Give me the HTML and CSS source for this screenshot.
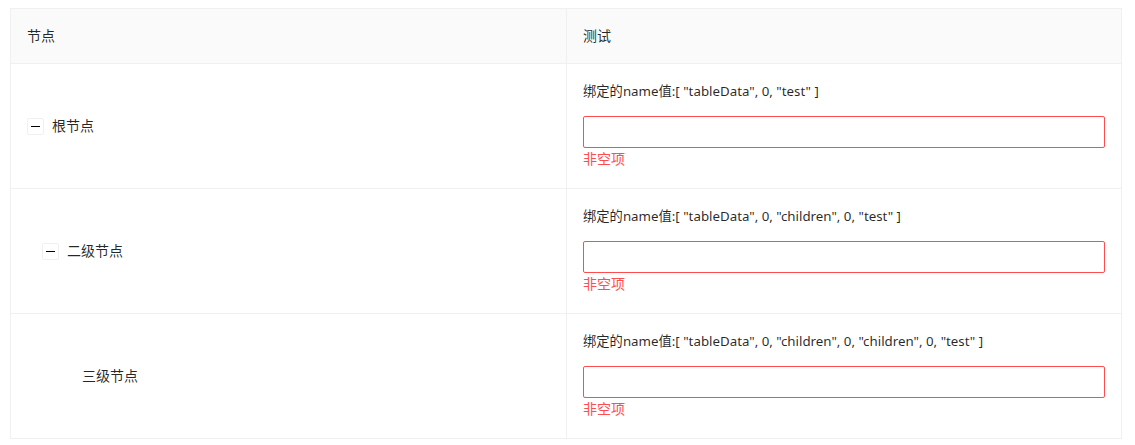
FILE: index.html
```html
<!DOCTYPE html>
<html lang="zh">
<head>
<meta charset="utf-8">
<link rel="stylesheet" href="styles.css">
</head>
<body>
<table class="tree-table">
  <thead>
    <tr>
      <th class="col-node">节点</th>
      <th class="col-test">测试</th>
    </tr>
  </thead>
  <tbody>
    <tr>
      <td class="cell-node">
        <span class="node level-0"><span class="expand"></span><span>根节点</span></span>
      </td>
      <td class="cell-test">
        <div class="label">绑定的name值:[ "tableData", 0, "test" ]</div>
        <div class="input"></div>
        <div class="error">非空项</div>
      </td>
    </tr>
    <tr>
      <td class="cell-node">
        <span class="node level-1"><span class="expand"></span><span>二级节点</span></span>
      </td>
      <td class="cell-test">
        <div class="label">绑定的name值:[ "tableData", 0, "children", 0, "test" ]</div>
        <div class="input"></div>
        <div class="error">非空项</div>
      </td>
    </tr>
    <tr>
      <td class="cell-node">
        <span class="node level-2"><span class="spacer"></span><span>三级节点</span></span>
      </td>
      <td class="cell-test">
        <div class="label">绑定的name值:[ "tableData", 0, "children", 0, "children", 0, "test" ]</div>
        <div class="input"></div>
        <div class="error">非空项</div>
      </td>
    </tr>
  </tbody>
</table>
</body>
</html>
```
FILE: styles.css
```css
body {
  margin: 8px 13px 0 10px;
  font-family: "Noto Sans", "Noto Sans CJK SC", sans-serif;
  font-size: 14px;
  color: rgba(0, 0, 0, 0.85);
  background: #fff;
}

.tree-table {
  width: 1112px;
  border-collapse: collapse;
  table-layout: fixed;
  border: 1px solid #f0f0f0;
}

.tree-table th,
.tree-table td {
  border: 1px solid #f0f0f0;
  padding: 16px;
  text-align: left;
  line-height: 22px;
}

.tree-table th {
  background: #fafafa;
  font-weight: normal;
  height: 22px;
  padding-top: 16px;
  padding-bottom: 16px;
}

.col-node { width: 523px; }

.tree-table .cell-node { vertical-align: middle; }
.tree-table .cell-test { vertical-align: top; padding-bottom: 18px; }

.node {
  display: flex;
  align-items: center;
}
.level-1 { padding-left: 15px; }
.level-2 { padding-left: 30px; }

.expand {
  position: relative;
  box-sizing: border-box;
  width: 17px;
  height: 17px;
  border: 1px solid #f0f0f0;
  border-radius: 2px;
  margin-right: 8px;
  background: #fff;
}
.expand::before {
  content: "";
  position: absolute;
  left: 3px;
  right: 3px;
  top: 7px;
  height: 1px;
  background: #000;
}
.spacer {
  width: 17px;
  height: 17px;
  margin-right: 8px;
}

.label {
  font-size: 13.3px;
  line-height: 22px;
  margin-bottom: 14px;
  white-space: nowrap;
}

.input {
  box-sizing: border-box;
  height: 32px;
  border: 1px solid #ff4d4f;
  border-radius: 2px;
  background: #fff;
}

.error {
  color: #ff4d4f;
  line-height: 22px;
}
```
